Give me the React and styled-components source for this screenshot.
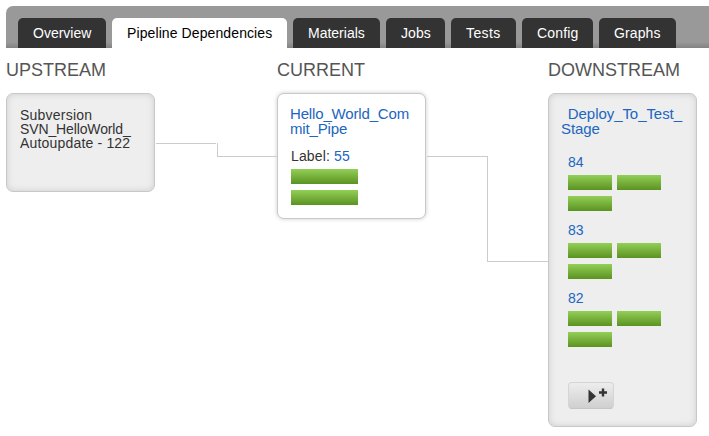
import React from "react";
import styled, { createGlobalStyle } from "styled-components";

const GlobalStyle = createGlobalStyle`
  * { box-sizing: border-box; }
  html, body { margin: 0; background: #fff; overflow: hidden; }
  body { font-family: "Liberation Sans", Arial, Helvetica, sans-serif; font-size: 14px; color: #333; }
`;

const Page = styled.div`
  width: 709px;
  height: 436px;
  padding: 6px 0 0 6px;
  overflow: hidden;
`;

const TabBar = styled.nav`
  display: flex;
  align-items: flex-end;
  gap: 6px;
  height: 42px;
  padding-left: 12px;
  border-top-left-radius: 7px;
  background: linear-gradient(#999 0, #999 36px, #828282 42px);
`;

const Tab = styled.a`
  width: ${(p) => p.$width}px;
  height: 30px;
  padding-left: 15px;
  line-height: 30px;
  letter-spacing: ${(p) => p.$spacing}px;
  white-space: nowrap;
  border-radius: 5px 5px 0 0;
  color: ${(p) => (p.$active ? "#000" : "#fff")};
  background: ${(p) => (p.$active ? "#fff" : "#333")};
`;

const Graph = styled.main`
  display: grid;
  grid-template-columns: 149px 122px 149px 122px 149px;
  align-items: start;
`;

const Heading = styled.h2`
  grid-column: span ${(p) => p.$span};
  height: 45px;
  margin: 0;
  padding-top: 11px;
  font-size: 18px;
  line-height: 22px;
  font-weight: normal;
  color: #555;
`;

const Card = styled.section`
  height: ${(p) => p.$height}px;
  padding: ${(p) => p.$padding};
  border: 1px solid #c8c8c8;
  border-radius: 7px;
  background: ${(p) => (p.$current ? "#fff" : "#eee")};
  box-shadow: ${(p) => (p.$current ? "0 0 4px #ccc" : "inset 0 0 6px #ccc")};
`;

const Material = styled.p`
  margin: 0;
  line-height: 14px;
  letter-spacing: ${(p) => p.$spacing}px;
  white-space: nowrap;
`;

const Title = styled.h3`
  margin: 0 0 ${(p) => p.$gap}px;
  font-size: 15px;
  line-height: 15px;
  font-weight: normal;
  letter-spacing: ${(p) => p.$spacing}px;
  word-spacing: -0.7px;
  white-space: pre;
  color: #2066c0;
`;

const Label = styled.p`
  margin: 0;
  padding-left: 1px;
  line-height: 16px;
  letter-spacing: 0.14px;
`;

const Link = styled.a`
  color: #2066c0;
`;

const Run = styled.div`
  height: 68px;
  padding-left: 7px;
  line-height: 16px;
`;

const Stages = styled.div`
  display: flex;
  flex-wrap: wrap;
  gap: 6px 5px;
  margin: ${(p) => p.$margin};
`;

const Stage = styled.span`
  width: ${(p) => p.$width}px;
  height: 15px;
  background: linear-gradient(#93cf57, #5b9321);
`;

const TriggerButton = styled.button`
  display: block;
  width: 46px;
  height: 27px;
  margin: 24px 0 0 7px;
  padding: 0;
  border: 1px solid #d5d5d5;
  border-bottom-color: #c5c5c5;
  border-radius: 4px;
  background: linear-gradient(#ededed, #cfcfcf);
  svg { display: block; }
`;

const Connector = styled.div`
  display: flex;
  margin-top: ${(p) => p.$top}px;
`;

const Lead = styled.span`
  width: ${(p) => p.$width}px;
  margin-left: 1px;
  border-top: 1px solid #ccc;
`;

const Drop = styled.span`
  flex: 1;
  margin-left: ${(p) => p.$gap}px;
  height: ${(p) => p.$height}px;
  border: solid #ccc;
  border-width: 0 0 1px 1px;
`;

const tabs = [
  ["Overview", 88, 0],
  ["Pipeline Dependencies", 175, 0.1],
  ["Materials", 87, 0],
  ["Jobs", 59, 0.1],
  ["Tests", 65, 0.4],
  ["Config", 71, 0.15],
  ["Graphs", 77, 0.1],
];

const runs = [84, 83, 82];

export default function App() {
  return (
    <Page>
      <GlobalStyle />
      <TabBar>
        {tabs.map(([name, width, spacing]) => (
          <Tab key={name} $width={width} $spacing={spacing} $active={name === "Pipeline Dependencies"}>{name}</Tab>
        ))}
      </TabBar>
      <Graph>
        <Heading $span={2}>UPSTREAM</Heading>
        <Heading $span={2}>CURRENT</Heading>
        <Heading $span={1}>DOWNSTREAM</Heading>

        <Card $height={99} $padding="14px 13px">
          <Material $spacing={0.22}>Subversion</Material>
          <Material $spacing={-0.13}>SVN_HelloWorld_</Material>
          <Material $spacing={0.18}>Autoupdate - 122</Material>
        </Card>
        <Connector $top={50}>
          <Lead $width={60} />
          <Drop $gap={1} $height={14} />
        </Connector>
        <Card $current $height={126} $padding="12px 12px">
          <Title $gap={12} $spacing={-0.16}>{"Hello_World_Com\nmit_Pipe"}</Title>
          <Label>Label: <Link>55</Link></Label>
          <Stages $margin="5px 0 0 1px">
            <Stage $width={67} />
            <Stage $width={67} />
          </Stages>
        </Card>
        <Connector $top={63}>
          <Lead $width={60} />
          <Drop $gap={0} $height={106} />
        </Connector>
        <Card $height={334} $padding="12px 12px">
          <Title $gap={18} $spacing={-0.06}>{"  Deploy_To_Test_\nStage"}</Title>
          {runs.map((run) => (
            <Run key={run}>
              <Link>{run}</Link>
              <Stages $margin="5px 0 0">
                <Stage $width={44} />
                <Stage $width={44} />
                <Stage $width={44} />
              </Stages>
            </Run>
          ))}
          <TriggerButton aria-label="Trigger with options">
            <svg width="44" height="25" viewBox="0 0 44 25">
              <path d="M19.5 6.5v13.5l7.5-6.75z" fill="#333" />
              <path d="M30 9.5h8M34 5.5v8" stroke="#333" strokeWidth="2.4" />
            </svg>
          </TriggerButton>
        </Card>
      </Graph>
    </Page>
  );
}
